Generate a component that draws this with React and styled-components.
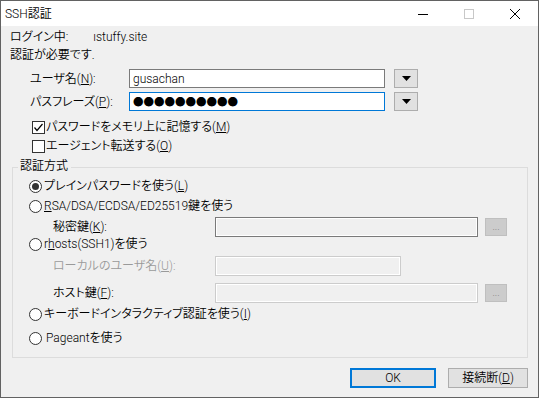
import React from 'react';
import styled, { createGlobalStyle } from 'styled-components';

const Global = createGlobalStyle`
  html, body { margin: 0; padding: 0; background: #ffffff; }
  body {
    font-family: "Meiryo UI", Roboto, "Noto Sans CJK JP", sans-serif;
    font-size: 12px;
    font-weight: 350;
    font-feature-settings: "palt";
    color: #000;
  }
  * { box-sizing: border-box; }
`;

const Window = styled.div`
  width: 539px;
  height: 398px;
  border: 1px solid #626262;
  background: #f0f0f0;
  display: flex;
  flex-direction: column;
  overflow: hidden;
`;

const TitleBar = styled.div`
  height: 25px;
  flex-shrink: 0;
  background: #ffffff;
  display: flex;
  align-items: center;
`;

const Title = styled.div`
  flex: 1;
  padding-left: 4px;
  padding-top: 1px;
  line-height: 16px;
`;

const CaptionButton = styled.div`
  width: 46px;
  height: 25px;
  display: flex;
  align-items: center;
  justify-content: center;
`;

const Body = styled.div`
  flex: 1;
  display: flex;
  flex-direction: column;
  padding: 2px 10px 0 9px;
`;

const Row = styled.div`
  display: flex;
  align-items: center;
  height: ${p => p.$h || 16}px;
  margin-top: ${p => p.$mt || 0}px;
  padding-left: ${p => p.$pl || 0}px;
  line-height: 16px;
  white-space: nowrap;
`;

const Label = styled.div`
  width: ${p => p.$w}px;
  flex-shrink: 0;
  color: ${p => (p.$disabled ? '#9a9a9a' : 'inherit')};
`;

const Host = styled.span`
  margin-left: 25px;
`;

const Mn = styled.u`
  text-decoration: underline;
  text-underline-offset: 1px;
`;

const Field = styled.div`
  width: ${p => p.$w}px;
  height: ${p => p.$h || 19}px;
  flex-shrink: 0;
  display: flex;
  align-items: center;
  padding-left: 3px;
  background: ${p => (p.$kind === 'edit' || p.$kind === 'focus' ? '#ffffff' : '#f0f0f0')};
  border: 1px solid
    ${p =>
      p.$kind === 'focus'
        ? '#0078d7'
        : p.$kind === 'disabled'
        ? '#cccccc'
        : '#7a7a7a'};
  box-shadow: ${p => (p.$kind === 'edit' || p.$kind === 'focus' ? 'none' : 'inset 0 0 0 1px #ffffff')};
  line-height: 16px;
`;

const Dots = styled.span`
  font-family: "Noto Sans CJK JP", sans-serif;
  font-feature-settings: normal;
  font-weight: 400;
  font-size: 10.5px;
  line-height: 12px;
  color: #000;
`;

const DropButton = styled.div`
  width: 24px;
  height: 19px;
  margin-left: 9px;
  background: #e1e1e1;
  border: 1px solid #adadad;
  display: flex;
  align-items: center;
  justify-content: center;
`;

const BrowseButton = styled.div`
  width: 22px;
  height: 18px;
  margin-left: 7px;
  background: #cccccc;
  border: 1px solid #bfbfbf;
  color: #838383;
  font-size: 10px;
  line-height: 10px;
  display: flex;
  align-items: flex-end;
  justify-content: center;
  padding-bottom: 3px;
`;

const Box = styled.span`
  width: 13px;
  height: 13px;
  flex-shrink: 0;
  border: 1px solid #333333;
  background: #ffffff;
  margin-right: 1px;
  display: flex;
  align-items: center;
  justify-content: center;
`;

const Radio = styled.span`
  width: 13px;
  height: 13px;
  flex-shrink: 0;
  border: 1px solid #333333;
  border-radius: 50%;
  background: #ffffff;
  margin-right: ${p => p.$gap || 2}px;
  display: flex;
  align-items: center;
  justify-content: center;
  &::after {
    content: '';
    display: ${p => (p.$on ? 'block' : 'none')};
    width: 7px;
    height: 7px;
    border-radius: 50%;
    background: #333333;
  }
`;

const Group = styled.fieldset`
  margin: 2px 0 0 2px;
  padding: 0 0 11px 0;
  border: 1px solid #dcdcdc;
  min-width: 0;
`;

const Legend = styled.legend`
  margin-left: 5px;
  padding: 2px 3px 4px 2px;
  line-height: 16px;
`;

const ButtonBar = styled.div`
  display: flex;
  justify-content: flex-end;
  gap: 12px;
  margin-top: 10px;
`;

const PushButton = styled.div`
  width: ${p => p.$w}px;
  height: 20px;
  background: #e1e1e1;
  border: ${p => (p.$default ? '2px solid #0078d7' : '1px solid #adadad')};
  display: flex;
  align-items: center;
  justify-content: center;
  line-height: 16px;
`;

const Triangle = () => (
  <svg width="9" height="5" viewBox="0 0 9 5">
    <polygon points="0,0 9,0 4.5,5" fill="#000" />
  </svg>
);

const Check = () => (
  <svg width="11" height="11" viewBox="0 0 11 11">
    <polyline points="1.5,5.5 4,8.5 9.5,2" fill="none" stroke="#000" strokeWidth="1.2" />
  </svg>
);

export default function App() {
  return (
    <>
      <Global />
      <Window>
        <TitleBar>
          <Title>SSH認証</Title>
          <CaptionButton>
            <svg width="10" height="10" viewBox="0 0 10 10">
              <line x1="0" y1="5.5" x2="10" y2="5.5" stroke="#000" strokeWidth="1" />
            </svg>
          </CaptionButton>
          <CaptionButton>
            <svg width="10" height="10" viewBox="0 0 10 10">
              <rect x="0.5" y="0.5" width="9" height="9" fill="none" stroke="#c8c8c8" strokeWidth="1" />
            </svg>
          </CaptionButton>
          <CaptionButton>
            <svg width="10" height="10" viewBox="0 0 10 10">
              <path d="M0,0 L10,10 M10,0 L0,10" stroke="#000" strokeWidth="1" />
            </svg>
          </CaptionButton>
        </TitleBar>
        <Body>
          <Row $h={18}>
            ログイン中:
            <Host>ıstuffy.site</Host>
          </Row>
          <Row $h={18}>認証が必要です.</Row>

          <Row $h={19} $mt={5} $pl={20}>
            <Label $w={99}>
              ユーザ名(<Mn>N</Mn>):
            </Label>
            <Field $w={256} $kind="edit">gusachan</Field>
            <DropButton>
              <Triangle />
            </DropButton>
          </Row>
          <Row $h={19} $mt={4} $pl={20}>
            <Label $w={99}>
              パスフレーズ(<Mn>P</Mn>):
            </Label>
            <Field $w={256} $kind="focus">
              <Dots>●●●●●●●●●●</Dots>
            </Field>
            <DropButton>
              <Triangle />
            </DropButton>
          </Row>

          <Row $mt={8} $pl={22}>
            <Box>
              <Check />
            </Box>
            パスワードをメモリ上に記憶する(<Mn>M</Mn>)
          </Row>
          <Row $mt={3} $pl={22}>
            <Box />
            エージェント転送する(<Mn>O</Mn>)
          </Row>

          <Group>
            <Legend>認証方式</Legend>
            <Row $pl={16}>
              <Radio $on />
              プレインパスワードを使う(<Mn>L</Mn>)
            </Row>
            <Row $mt={4} $pl={16}>
              <Radio />
              <Mn>R</Mn>SA/DSA/ECDSA/ED25519鍵を使う
            </Row>
            <Row $h={20} $mt={3} $pl={40}>
              <Label $w={162}>
                秘密鍵(<Mn>K</Mn>):
              </Label>
              <Field $w={263} $h={20} $kind="readonly" />
              <BrowseButton>...</BrowseButton>
            </Row>
            <Row $h={14} $pl={16}>
              <Radio />
              r<Mn>h</Mn>osts(SSH1)を使う
            </Row>
            <Row $h={20} $mt={5} $pl={40}>
              <Label $w={162} $disabled>
                ローカルのユーザ名(<Mn>U</Mn>):
              </Label>
              <Field $w={186} $h={20} $kind="disabled" />
            </Row>
            <Row $h={20} $mt={7} $pl={40}>
              <Label $w={162}>
                ホスト鍵(<Mn>F</Mn>):
              </Label>
              <Field $w={263} $h={20} $kind="disabled" />
              <BrowseButton>...</BrowseButton>
            </Row>
            <Row $mt={3} $pl={16}>
              <Radio />
              キーボードインタラクティブ認証を使う(<Mn>I</Mn>)
            </Row>
            <Row $mt={8} $pl={16}>
              <Radio $gap={4} />
              Pageantを使う
            </Row>
          </Group>

          <ButtonBar>
            <PushButton $w={86} $default>
              OK
            </PushButton>
            <PushButton $w={80}>
              接続断(<Mn>D</Mn>)
            </PushButton>
          </ButtonBar>
        </Body>
      </Window>
    </>
  );
}
